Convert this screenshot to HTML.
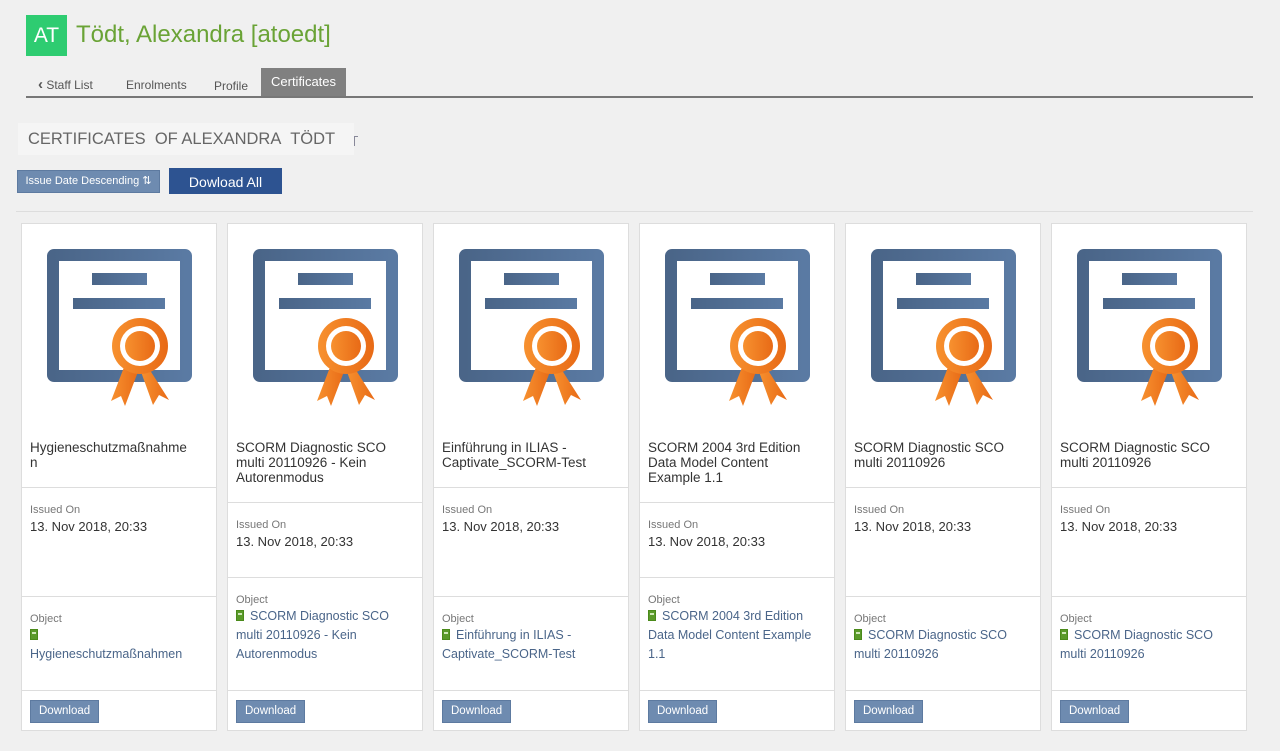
<!DOCTYPE html>
<html><head><meta charset="utf-8"><style>
*{box-sizing:border-box;margin:0;padding:0}
body{width:1280px;height:751px;background:#f0f0f0;font-family:"Liberation Sans",sans-serif;position:relative;overflow:hidden;color:#333}
.av{position:absolute;left:26px;top:15px;width:41px;height:41px;background:#2ecc71;color:#fff;font-size:21px;line-height:41px;text-align:center}
.name{position:absolute;left:76px;top:21px;font-size:24px;color:#6aa336}
.tabs{position:absolute;left:26px;top:68px;width:1227px;height:30px;border-bottom:2px solid #777}
.tab{position:absolute;top:10px;font-size:12px;color:#555}
.tab.act{top:0;background:#808080;color:#fff;height:28px;line-height:28px;padding:0 10px;font-size:13px}
.h{position:absolute;left:18px;top:123px;width:336px;height:32px;background:#f5f5f5;font-size:16.5px;color:#666;padding:7px 10px;white-space:nowrap}
.b1{position:absolute;left:17px;top:170px;width:143px;height:23px;background:#6e8bb0;border:1px solid #5d7aa0;color:#fff;font-size:11px;line-height:21px;text-align:center}
.b2{position:absolute;left:169px;top:168px;width:113px;height:26px;background:#2d5391;color:#fff;font-size:14px;line-height:28px;text-align:center}
.hr{position:absolute;left:16px;top:211px;width:1237px;border-top:1px solid #ddd}
.card{position:absolute;top:223px;width:196px;height:508px;background:#fff;border:1px solid #ddd}
.s{border-bottom:1px solid #ddd;padding:0 8px}
.t{font-size:13.5px;line-height:15px;color:#333}
.lbl{font-size:11px;color:#777;line-height:14px}
.d{font-size:13px;line-height:19px;color:#333}
.lk{font-size:12.5px;line-height:19px;color:#4a6589}
.ic{display:inline-block;width:8px;height:11px;background:#5a9a2a;border:1px solid #4a8a1a;position:relative;top:1px;margin-right:6px}
.ic:after{content:"";position:absolute;left:1px;top:2px;width:4px;height:2px;background:#cfe8b8}
.dl{display:inline-block;margin-top:9px;background:#6e8bb0;border:1px solid #5d7aa0;color:#fff;font-size:11.5px;padding:0 8px;height:23px;line-height:21px}
svg{position:absolute;left:0;top:0}
</style></head><body>
<div class="av">AT</div>
<div class="name">Tödt, Alexandra [atoedt]</div>
<div class="tabs">
<span class="tab" style="left:12px"><b style="font-size:15px;line-height:12px">‹</b> Staff List</span>
<span class="tab" style="left:100px">Enrolments</span>
<span class="tab" style="left:188px;top:11px">Profile</span>
<span class="tab act" style="left:235px">Certificates</span>
</div>
<div class="h">CERTIFICATES&nbsp; OF ALEXANDRA&nbsp; TÖDT</div>
<div style="position:absolute;left:354px;top:136px;width:4px;height:10px;border-top:1px solid #889;border-left:1px solid #889"></div>
<div class="b1">Issue Date Descending ⇅</div>
<div class="b2">Dowload All</div>
<div class="hr"></div>

<svg width="0" height="0"><defs>
<linearGradient id="g" x1="0" x2="1"><stop offset="0" stop-color="#4a6588"/><stop offset="1" stop-color="#5a7aa3"/></linearGradient>
<linearGradient id="o" x1="0" x2="1"><stop offset="0" stop-color="#f7912f"/><stop offset="1" stop-color="#e86a16"/></linearGradient>
<g id="cert">
<rect x="31" y="31" width="133" height="121" fill="none" stroke="url(#g)" stroke-width="12" rx="1"/>
<rect x="70" y="49" width="55" height="12" fill="url(#g)"/>
<rect x="51" y="74" width="92" height="11" fill="url(#g)"/>
<polygon points="104,138 89,177 99,172 103,182 117,145" fill="url(#o)"/>
<polygon points="124,140 118,145 131,181 137,171 147,176" fill="url(#o)"/>
<circle cx="118" cy="122" r="28" fill="url(#o)"/>
<circle cx="118" cy="122" r="20" fill="#fff"/>
<circle cx="118" cy="122" r="15" fill="url(#o)"/>
</g></defs></svg>

<div class="card" style="left:21px">
<svg width="196" height="200"><use href="#cert"/></svg>
<div class="s" style="height:264px;padding-top:216px"><div class="t">Hygieneschutzmaßnahme<br>n</div></div>
<div class="s" style="height:109px;padding-top:15px"><div class="lbl">Issued On</div><div class="d">13. Nov 2018, 20:33</div></div>
<div class="s" style="height:94px;padding-top:15px"><div class="lbl">Object</div><div class="lk"><span class="ic"></span><br>Hygieneschutzmaßnahmen</div></div>
<div style="padding:0 8px"><span class="dl">Download</span></div>
</div>

<div class="card" style="left:227px">
<svg width="196" height="200"><use href="#cert"/></svg>
<div class="s" style="height:279px;padding-top:216px"><div class="t">SCORM Diagnostic SCO<br>multi 20110926 - Kein<br>Autorenmodus</div></div>
<div class="s" style="height:75px;padding-top:15px"><div class="lbl">Issued On</div><div class="d">13. Nov 2018, 20:33</div></div>
<div class="s" style="height:113px;padding-top:15px"><div class="lbl">Object</div><div class="lk"><span class="ic"></span>SCORM Diagnostic SCO<br>multi 20110926 - Kein<br>Autorenmodus</div></div>
<div style="padding:0 8px"><span class="dl">Download</span></div>
</div>

<div class="card" style="left:433px">
<svg width="196" height="200"><use href="#cert"/></svg>
<div class="s" style="height:264px;padding-top:216px"><div class="t">Einführung in ILIAS -<br>Captivate_SCORM-Test</div></div>
<div class="s" style="height:109px;padding-top:15px"><div class="lbl">Issued On</div><div class="d">13. Nov 2018, 20:33</div></div>
<div class="s" style="height:94px;padding-top:15px"><div class="lbl">Object</div><div class="lk"><span class="ic"></span>Einführung in ILIAS -<br>Captivate_SCORM-Test</div></div>
<div style="padding:0 8px"><span class="dl">Download</span></div>
</div>

<div class="card" style="left:639px">
<svg width="196" height="200"><use href="#cert"/></svg>
<div class="s" style="height:279px;padding-top:216px"><div class="t">SCORM 2004 3rd Edition<br>Data Model Content<br>Example 1.1</div></div>
<div class="s" style="height:75px;padding-top:15px"><div class="lbl">Issued On</div><div class="d">13. Nov 2018, 20:33</div></div>
<div class="s" style="height:113px;padding-top:15px"><div class="lbl">Object</div><div class="lk"><span class="ic"></span>SCORM 2004 3rd Edition<br>Data Model Content Example<br>1.1</div></div>
<div style="padding:0 8px"><span class="dl">Download</span></div>
</div>

<div class="card" style="left:845px">
<svg width="196" height="200"><use href="#cert"/></svg>
<div class="s" style="height:264px;padding-top:216px"><div class="t">SCORM Diagnostic SCO<br>multi 20110926</div></div>
<div class="s" style="height:109px;padding-top:15px"><div class="lbl">Issued On</div><div class="d">13. Nov 2018, 20:33</div></div>
<div class="s" style="height:94px;padding-top:15px"><div class="lbl">Object</div><div class="lk"><span class="ic"></span>SCORM Diagnostic SCO<br>multi 20110926</div></div>
<div style="padding:0 8px"><span class="dl">Download</span></div>
</div>

<div class="card" style="left:1051px">
<svg width="196" height="200"><use href="#cert"/></svg>
<div class="s" style="height:264px;padding-top:216px"><div class="t">SCORM Diagnostic SCO<br>multi 20110926</div></div>
<div class="s" style="height:109px;padding-top:15px"><div class="lbl">Issued On</div><div class="d">13. Nov 2018, 20:33</div></div>
<div class="s" style="height:94px;padding-top:15px"><div class="lbl">Object</div><div class="lk"><span class="ic"></span>SCORM Diagnostic SCO<br>multi 20110926</div></div>
<div style="padding:0 8px"><span class="dl">Download</span></div>
</div>
</body></html>
